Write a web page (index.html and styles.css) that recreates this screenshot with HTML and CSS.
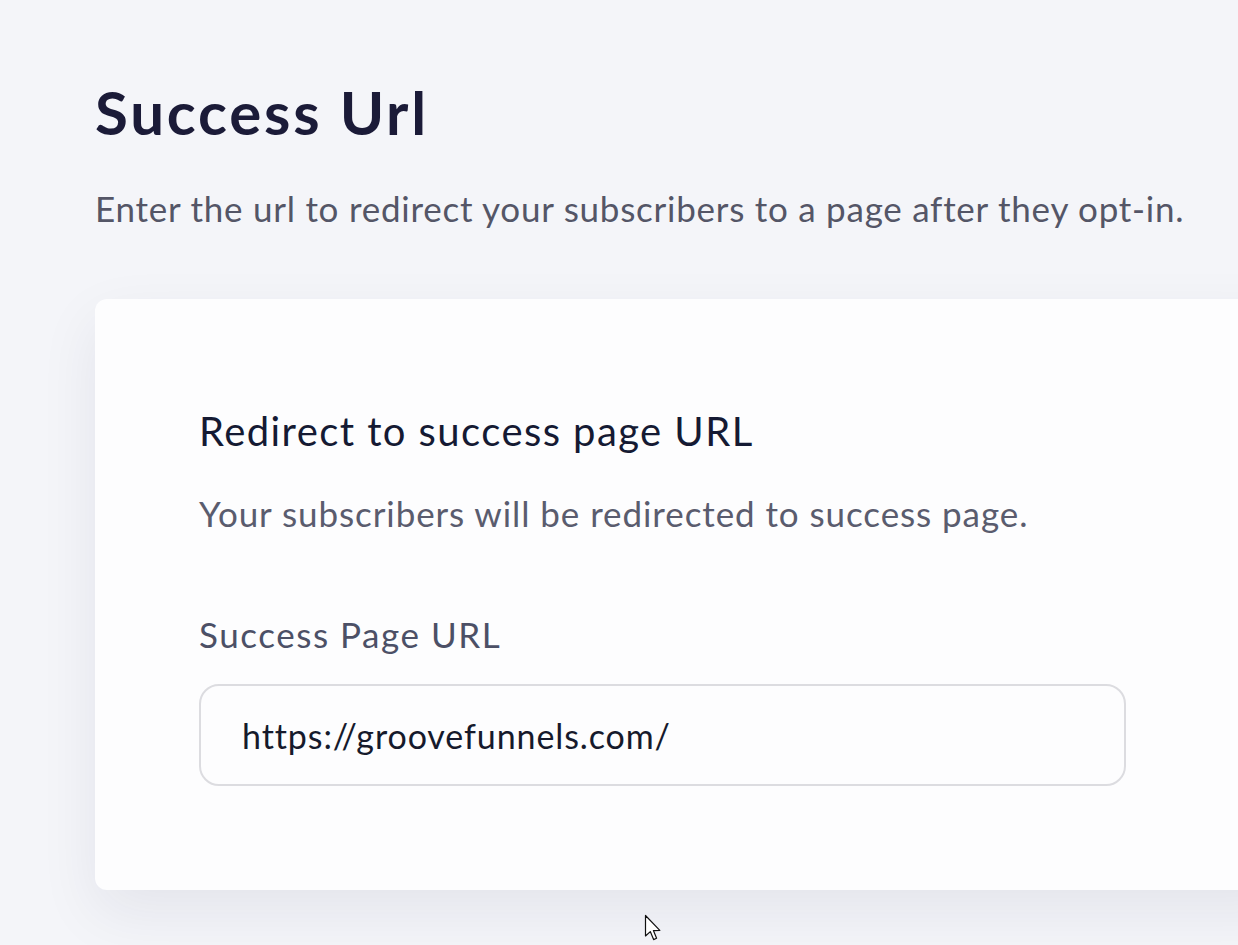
FILE: index.html
```html
<!DOCTYPE html>
<html lang="en">
<head>
<meta charset="utf-8">
<title>Success Url</title>
<link rel="stylesheet" href="styles.css">
</head>
<body>
<main class="page">
  <h1 class="page-title">Success Url</h1>
  <p class="page-subtitle">Enter the url to redirect your subscribers to a page after they opt-in.</p>
  <section class="card">
    <h2 class="card-title">Redirect to success page URL</h2>
    <p class="card-desc">Your subscribers will be redirected to success page.</p>
    <label class="field-label" for="success-url">Success Page URL</label>
    <div class="field-input" id="success-url">https://groovefunnels.com/</div>
  </section>
</main>
<svg class="cursor" width="20" height="30" viewBox="0 0 20 30" aria-hidden="true">
  <path d="M1.5 1.5 L1.5 22 L6.3 17.6 L9.6 25.6 L12.6 24.3 L9.4 16.6 L15.8 16.4 Z" fill="#fff" stroke="#111" stroke-width="1.2" stroke-linejoin="round"/>
</svg>
</body>
</html>
```
FILE: styles.css
```css
html, body {
  margin: 0;
  padding: 0;
}
body {
  background: #f4f5f9;
  font-family: "Lato", "Noto Sans", sans-serif;
  width: 1238px;
  height: 945px;
  overflow: hidden;
  position: relative;
}
.page {
  padding: 76px 0 0 95px;
}
.page-title {
  margin: 0;
  font-size: 60px;
  line-height: 72px;
  font-weight: 700;
  letter-spacing: 2.8px;
  color: #1b1b38;
}
.page-subtitle {
  margin: 40px 0 0;
  font-size: 35px;
  line-height: 41px;
  letter-spacing: 0.75px;
  color: #545667;
}
.card {
  margin-top: 70px;
  width: 1200px;
  box-sizing: border-box;
  padding: 108px 0 104px 104px;
  background: #fdfdfe;
  border-radius: 12px;
  box-shadow: 0 22px 60px rgba(30, 30, 70, 0.075);
}
.card-title {
  margin: 0;
  font-size: 40px;
  line-height: 48px;
  font-weight: 400;
  letter-spacing: 1.42px;
  color: #151a33;
}
.card-desc {
  margin: 38px 0 0;
  font-size: 35px;
  line-height: 41px;
  letter-spacing: 0.92px;
  color: #5a5c6e;
}
.field-label {
  display: block;
  margin-top: 80px;
  font-size: 35px;
  line-height: 41px;
  letter-spacing: 1.55px;
  color: #4c5066;
}
.field-input {
  margin-top: 29px;
  width: 927px;
  height: 102px;
  box-sizing: border-box;
  border: 2px solid #dcdce0;
  border-radius: 20px;
  padding: 0 41px;
  display: flex;
  align-items: center;
  font-size: 34px;
  letter-spacing: 0.9px;
  color: #161a2c;
  background: #fdfdfe;
}
.cursor {
  position: absolute;
  left: 644px;
  top: 914px;
}
```
